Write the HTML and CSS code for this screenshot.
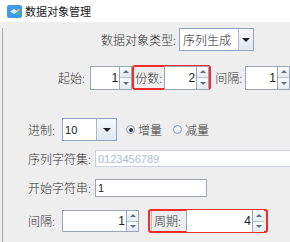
FILE: index.html
```html
<!DOCTYPE html>
<html lang="zh">
<head>
<meta charset="UTF-8" />
<title>数据对象管理</title>
<link rel="stylesheet" href="styles.css">
</head>
<body>
  <div class="window">
    <div class="titlebar">
      <svg class="app-icon" viewBox="0 0 15 13" aria-hidden="true">
        <rect x="0" y="0" width="15" height="13" rx="2" fill="#3d9ce8"/>
        <path d="M3 6.5 L7 4 L11 6.5 L7 9 Z" fill="#d8ecfb"/>
        <circle cx="11.5" cy="5" r="1.3" fill="#f2b33d"/>
        <circle cx="11.5" cy="8.5" r="1.3" fill="#6cc24a"/>
      </svg>
      <span class="title">数据对象管理</span>
    </div>

    <div class="content">
      <!-- 类型 -->
      <div class="row row-type">
        <span class="label">数据对象类型:</span>
        <div class="combo combo-type">
          <span class="combo-text">序列生成</span>
          <span class="combo-btn"><i class="caret"></i></span>
        </div>
      </div>

      <!-- 起始 / 份数 / 间隔 -->
      <div class="row row-start">
        <span class="label">起始:</span>
        <div class="spinner sp-start">
          <span class="sp-field">1</span>
          <span class="sp-arrows"><i class="up"></i><i class="down"></i></span>
        </div>
        <div class="mark mark-copies">
          <span class="label">份数:</span>
          <div class="spinner sp-copies">
            <span class="sp-field">2</span>
            <span class="sp-arrows"><i class="up"></i><i class="down"></i></span>
          </div>
        </div>
        <span class="label lbl-gap">间隔:</span>
        <div class="spinner sp-gap">
          <span class="sp-field">1</span>
          <span class="sp-arrows"><i class="up"></i><i class="down"></i></span>
        </div>
      </div>

      <!-- 进制 -->
      <div class="row row-base">
        <span class="label">进制:</span>
        <div class="combo combo-base">
          <span class="combo-text">10</span>
          <span class="combo-btn"><i class="caret"></i></span>
        </div>
        <span class="radio checked"></span><span class="label radio-lbl">增量</span>
        <span class="radio"></span><span class="label radio-lbl">减量</span>
      </div>

      <div class="row row-charset">
        <span class="label wide">序列字符集:</span>
        <span class="field disabled charset">0123456789</span>
      </div>

      <div class="row row-startstr">
        <span class="label wide">开始字符串:</span>
        <span class="field startstr">1</span>
      </div>

      <div class="row row-step">
        <span class="label">间隔:</span>
        <div class="spinner sp-step">
          <span class="sp-field">1</span>
          <span class="sp-arrows"><i class="up"></i><i class="down"></i></span>
        </div>
        <div class="mark mark-period">
          <span class="label cell">周期:</span>
          <div class="spinner sp-period">
            <span class="sp-field">4</span>
            <span class="sp-arrows"><i class="up"></i><i class="down"></i></span>
          </div>
        </div>
      </div>
    </div>
  </div>
</body>
</html>
```

FILE: styles.css
```css
html, body {
  margin: 0;
  background: #eeeeee;
}
body {
  width: 290px;
  height: 242px;
  overflow: hidden;
  font-family: "Noto Sans CJK SC", "Liberation Sans", sans-serif;
  font-size: 12px;
  font-weight: 300;
  color: #333;
}
.window {
  height: 242px;
}
.titlebar {
  height: 22px;
  background: #fff;
  display: flex;
  align-items: center;
  padding-left: 7px;
}
.app-icon {
  width: 15px;
  height: 13px;
  margin-right: 3px;
}
.title {
  font-size: 11px;
  font-weight: 400;
  color: #1a1a1a;
  line-height: 1;
}
.content {
  margin-left: 2px;
  border-left: 1px solid #a8a8a8;
  height: 220px;
  background: #eeeeee;
}
.row {
  display: flex;
  align-items: center;
}
.label {
  line-height: 1;
  white-space: nowrap;
  color: #333;
}

/* rows */
.row-type { margin-top: 6px; padding-left: 98px; height: 23px; }
.row-type .combo { margin-left: 3px; }
.row-start { margin-top: 14px; padding-left: 55px; height: 25px; }
.row-start .sp-start { margin-left: 5px; }
.row-base { margin-top: 28px; padding-left: 25px; height: 23px; }
.row-base .combo { margin-left: 7px; }
.row-charset { margin-top: 9px; padding-left: 25px; height: 17px; }
.row-startstr { margin-top: 12px; padding-left: 25px; height: 18px; }
.row-step { margin-top: 12px; padding-left: 25px; height: 24px; }
.row-step .sp-step { margin-left: 7px; }

/* combo box */
.combo {
  display: flex;
  height: 23px;
  box-sizing: border-box;
  border: 1px solid #8ea4bf;
  background: #fff;
}
.combo-type { width: 75px; }
.combo-base { width: 55px; }
.combo-text {
  flex: 1;
  display: flex;
  align-items: center;
  padding-left: 3px;
  font-size: 12px;
  color: #222;
}
.combo-base .combo-text { font-family: "Liberation Sans", sans-serif; font-size: 11px; font-weight: 400; padding-left: 2px; }
.combo-btn {
  width: 19px;
  border-left: 1px solid #a9b8cb;
  background: linear-gradient(#f7f9fc, #dfe7f1);
  display: flex;
  align-items: center;
  justify-content: center;
}
.combo-type .combo-btn { width: 14px; }
.caret {
  width: 0;
  height: 0;
  border-left: 4px solid transparent;
  border-right: 4px solid transparent;
  border-top: 4px solid #222;
}

/* spinner */
.spinner {
  display: flex;
  box-sizing: border-box;
  height: 24px;
  border: 1px solid #9aa7b6;
  background: #fff;
}
.sp-field {
  flex: 1;
  display: flex;
  align-items: center;
  justify-content: flex-end;
  padding-right: 1px;
  font-family: "Liberation Sans", sans-serif;
  font-size: 12px;
  font-weight: 400;
  color: #222;
}
.sp-arrows {
  width: 11px;
  display: flex;
  flex-direction: column;
  border-left: 1px solid #9aa7b6;
  background: #eef1f5;
}
.sp-arrows i {
  flex: 1;
  display: flex;
  align-items: center;
  justify-content: center;
  background: linear-gradient(#fbfcfd, #e4e9ef);
}
.sp-arrows i + i { border-top: 1px solid #b7c0ca; }
.sp-arrows i::before {
  content: "";
  border-left: 3px solid transparent;
  border-right: 3px solid transparent;
}
.sp-arrows .up::before { border-bottom: 3px solid #5f6f80; }
.sp-arrows .down::before { border-top: 3px solid #5f6f80; }
.sp-start { width: 47px; }
.sp-copies { width: 46px; margin-left: 2px; }
.sp-gap { width: 50px; margin-left: 3px; }
.sp-step { width: 77px; height: 22px; }
.sp-period { width: 78px; height: 22px; border: none; border-left: 1px solid #9aa7b6; }

/* red highlight */
.mark {
  display: flex;
  align-items: center;
  box-sizing: border-box;
  border: 2px solid #ef2b2b;
  border-radius: 3px;
}
.mark-copies {
  height: 25px;
  width: 79px;
  padding-left: 1px;
}
.lbl-gap { margin-left: 4px; }
.mark-period {
  margin-left: 9px;
  height: 24px;
  width: 120px;
  padding-left: 1px;
}
.mark-period .cell {
  height: 100%;
  display: flex;
  align-items: center;
  padding-left: 2px;
  width: 35px;
  box-sizing: border-box;
  border-left: 1px solid #bbb;
}

/* radio */
.radio {
  width: 9px;
  height: 9px;
  box-sizing: border-box;
  border-radius: 50%;
  border: 1px solid #8b9bb0;
  background: radial-gradient(circle at 40% 35%, #ffffff, #cfdbe8);
  margin-left: 9px;
  position: relative;
}
.radio.checked::after {
  content: "";
  position: absolute;
  inset: 1.5px;
  border-radius: 50%;
  background: #2b3540;
}
.radio-lbl { margin-left: 3px; }
.radio + .radio-lbl + .radio { margin-left: 11px; }

/* text fields */
.field {
  box-sizing: border-box;
  display: flex;
  align-items: center;
  padding-left: 2px;
  background: #fff;
  font-family: "Liberation Sans", sans-serif;
  font-size: 11px;
  font-weight: 400;
  color: #222;
}
.wide { width: 67px; }
.charset {
  flex: 1;
  height: 17px;
  border: 1px solid #c5d3e4;
  border-right: none;
  color: #a9bdd7;
}
.startstr {
  width: 112px;
  height: 18px;
  border: 1px solid #9aa7b6;
}
```
